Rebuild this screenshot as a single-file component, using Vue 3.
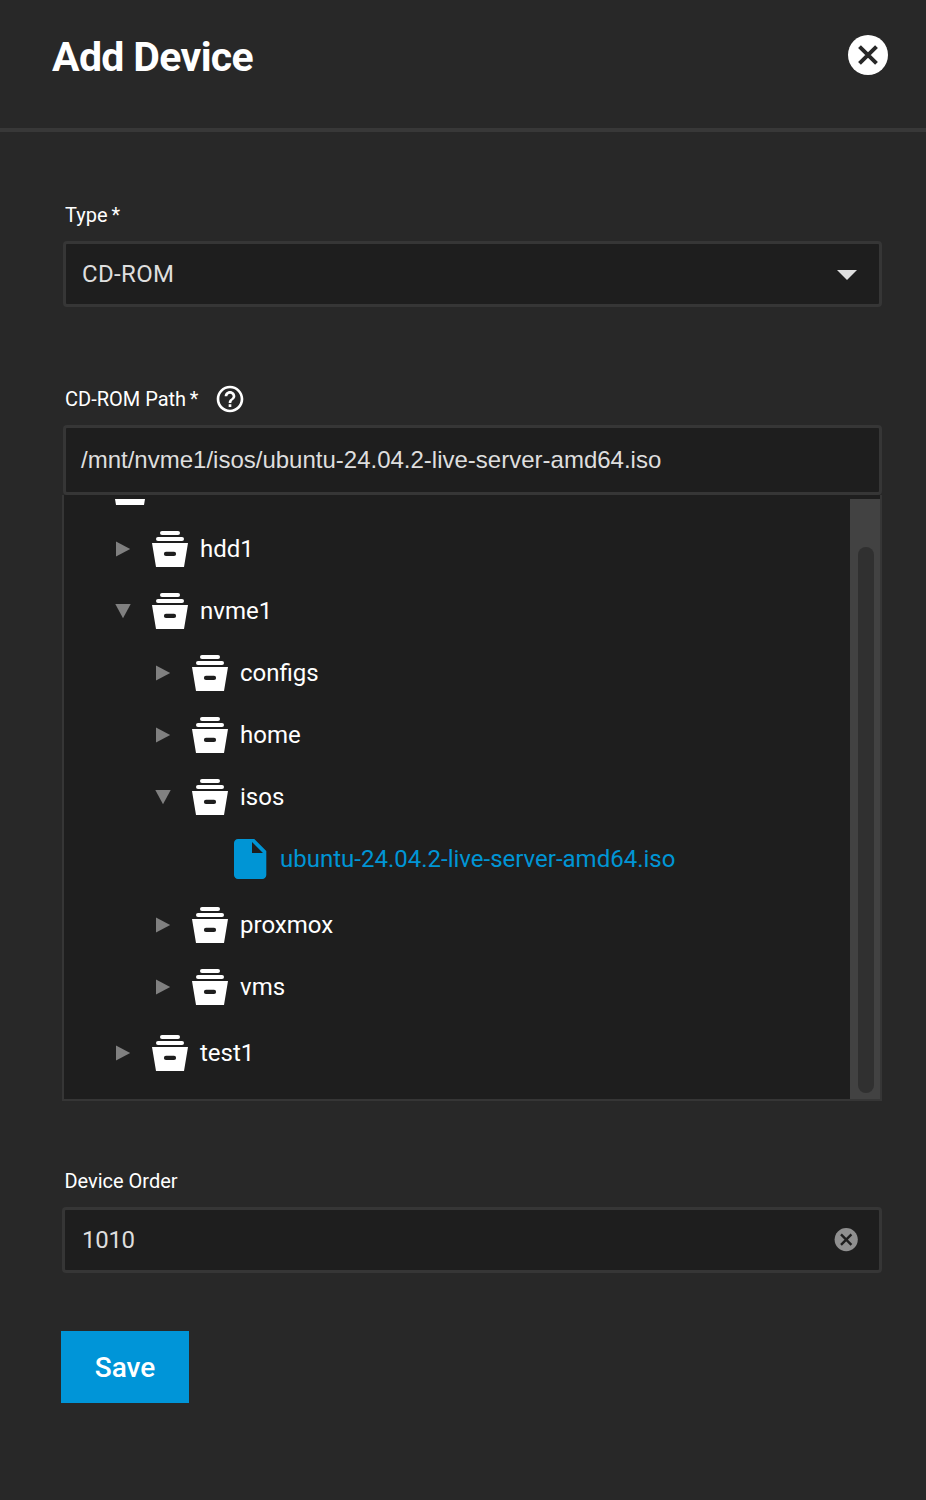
<script setup>
const rows = [
  { id: 'root', name: '', level: 0, state: 'open' },
  { id: 'hdd1', name: 'hdd1', level: 1, state: 'closed' },
  { id: 'nvme1', name: 'nvme1', level: 1, state: 'open' },
  { id: 'configs', name: 'configs', level: 2, state: 'closed' },
  { id: 'home', name: 'home', level: 2, state: 'closed' },
  { id: 'isos', name: 'isos', level: 2, state: 'open' },
  { id: 'ubuntu', name: 'ubuntu-24.04.2-live-server-amd64.iso', level: 3, state: 'file', last: true },
  { id: 'proxmox', name: 'proxmox', level: 2, state: 'closed' },
  { id: 'vms', name: 'vms', level: 2, state: 'closed', last: true },
  { id: 'test1', name: 'test1', level: 1, state: 'closed' },
]
</script>

<template>
  <div class="panel">
    <header class="header">
      <h1 class="title">Add Device</h1>
      <button class="close" aria-label="Close">
        <svg width="40" height="40" viewBox="0 0 40 40">
          <circle cx="20" cy="20" r="20" fill="#fff" />
          <path d="M11.5 11.6L28.5 28.4M28.5 11.6L11.5 28.4" stroke="#282828" stroke-width="4" />
        </svg>
      </button>
    </header>

    <form class="form" @submit.prevent>
      <div class="label type-label">Type<span class="star">*</span></div>
      <div class="box select">
        <span class="value plex">CD-ROM</span>
        <svg class="caret" width="20" height="10" viewBox="0 0 20 10"><path d="M0 0h20L10 10z" fill="#e0e0e0" /></svg>
      </div>

      <div class="label path-label">
        <span class="path-text">CD-ROM Path</span><span class="star">*</span>
        <svg class="help" width="32" height="32" viewBox="0 0 24 24" fill="#fff">
          <path d="M11 18h2v-2h-2v2zm1-16C6.480 2 2 6.480 2 12s4.480 10 10 10 10-4.480 10-10S17.520 2 12 2zm0 18c-4.410 0-8-3.590-8-8s3.590-8 8-8 8 3.590 8 8-3.590 8-8 8zm0-14c-2.210 0-4 1.790-4 4h2c0-1.100.9-2 2-2s2 .9 2 2c0 2-3 1.750-3 5h2c0-2.250 3-2.500 3-5 0-2.210-1.790-4-4-4z" />
        </svg>
      </div>
      <div class="box path">
        <span class="value arial">/mnt/nvme1/isos/ubuntu-24.04.2-live-server-amd64.iso</span>
      </div>

      <div class="tree">
        <div class="viewport">
          <div class="rows">
            <div v-for="row in rows" :key="row.id" class="row" :class="['level-' + row.level, { file: row.state === 'file', last: row.last }]">
              <span class="toggle">
                <svg v-if="row.state === 'closed'" width="16" height="16" viewBox="0 0 16 16"><path d="M1 .4v15.200L15.200 8z" fill="#808080" /></svg>
                <svg v-else-if="row.state === 'open'" width="16" height="16" viewBox="0 0 16 16"><path d="M.3 1h15.400L8 15.200z" fill="#808080" /></svg>
              </span>
              <svg class="icon" width="48" height="48" viewBox="0 0 48 48" fill="currentColor">
                <path v-if="row.state === 'file'" d="M12 4C9.800 4 8 5.800 8 8v32c0 2.200 1.800 4 4 4h24.300c2.200 0 4-1.800 4-4V16L28.300 4zm14 14V7l11 11z" />
                <template v-else>
                  <rect x="14" y="6" width="20" height="4" rx="2" />
                  <rect x="10" y="12" width="28" height="4" rx="2" />
                  <path fill-rule="evenodd" d="M6 18h36l-4 24H10zM20 26.800a2.100 2.100 0 0 0 0 4.200h8a2.100 2.100 0 0 0 0-4.200z" />
                </template>
              </svg>
              <span v-if="row.name" class="name">{{ row.name }}</span>
            </div>
          </div>
        </div>
        <div class="track"><div class="thumb"></div></div>
      </div>

      <div class="label order-label">Device Order</div>
      <div class="box order">
        <span class="value digits">1010</span>
        <svg class="clear" width="24" height="24" viewBox="0 0 24 24">
          <circle cx="12.200" cy="11.600" r="11.600" fill="#8f8f8f" />
          <path d="M7 6.400l10.400 10.400M17.400 6.400L7 16.800" stroke="#1e1e1e" stroke-width="2.400" />
        </svg>
      </div>

      <button class="save">Save</button>
    </form>
  </div>
</template>

<style>
body { background: #282828; }
</style>

<style scoped>
.panel { box-sizing: border-box; width: 926px; height: 1500px; background: #282828; color: #fff; font-family: Roboto, sans-serif; overflow: hidden; }
.header { box-sizing: border-box; height: 132px; border-bottom: 4px solid #383838; display: flex; justify-content: space-between; align-items: flex-start; padding: 35px 38px 0 52px; }
.title { margin: 0; font-size: 41px; line-height: 44px; font-weight: 700; letter-spacing: -0.65px; white-space: nowrap; }
.close { padding: 0; border: 0; background: none; width: 40px; height: 40px; }
svg { display: block; flex: none; }
.form { display: flex; flex-direction: column; padding: 0 44px 0 61px; }
.label { display: flex; align-items: center; font-size: 20px; line-height: 24px; height: 24px; margin-left: 4px; white-space: nowrap; }
.star { margin-left: 4px; }
.path-label .star { margin-left: 3.5px; }
.type-label { margin-top: 71px; }
.path-label { margin-top: 80px; }
.help { margin-left: 15.7px; }
.box { box-sizing: border-box; display: flex; align-items: center; justify-content: space-between; background: #1e1e1e; border: 3px solid #363636; border-radius: 4px; margin-left: 2px; }
.value { font-size: 24px; color: #dedede; white-space: nowrap; }
.select { height: 66px; margin-top: 14px; padding: 0 22px 0 16px; }
.caret { margin-top: 2px; }
.path { height: 70px; margin-top: 14px; padding: 0 16px 0 15px; }
.plex { letter-spacing: 0.35px; }
.arial { font-family: "Liberation Sans", Arial, sans-serif; }
.tree { box-sizing: border-box; height: 606px; margin-left: 1px; border: 2px solid #363636; border-top: 0; padding-top: 4px; background: #1e1e1e; display: flex; }
.viewport { flex: 1; overflow: hidden; }
.rows { margin-top: -43px; }
.row { height: 62px; display: flex; align-items: center; font-size: 24px; }
.row.last { margin-bottom: 4px; }
.level-0 { padding-left: 10px; }
.level-1 { padding-left: 51px; }
.level-2 { padding-left: 91px; }
.level-3 { padding-left: 131px; }
.toggle { width: 16px; height: 16px; margin-right: 15px; }
.level-0 .toggle { margin-right: 16px; }
.name { margin-left: 6px; white-space: nowrap; }
.file { color: #0095d5; }
.track { box-sizing: border-box; width: 30px; background: #424242; padding: 48px 6px 6px 8px; }
.thumb { height: 100%; border-radius: 8px; background: #303030; }
.order-label { margin-top: 68px; margin-left: 3.4px; }
.order { height: 66px; margin-top: 14px; margin-left: 1px; padding: 0 21px 0 17px; }
.digits { letter-spacing: -0.3px; }
.save { width: 128px; height: 72px; margin-top: 58px; padding: 0; border: 0; background: #0095d8; color: #fff; font-family: Roboto, sans-serif; font-size: 28px; font-weight: 500; }
</style>
